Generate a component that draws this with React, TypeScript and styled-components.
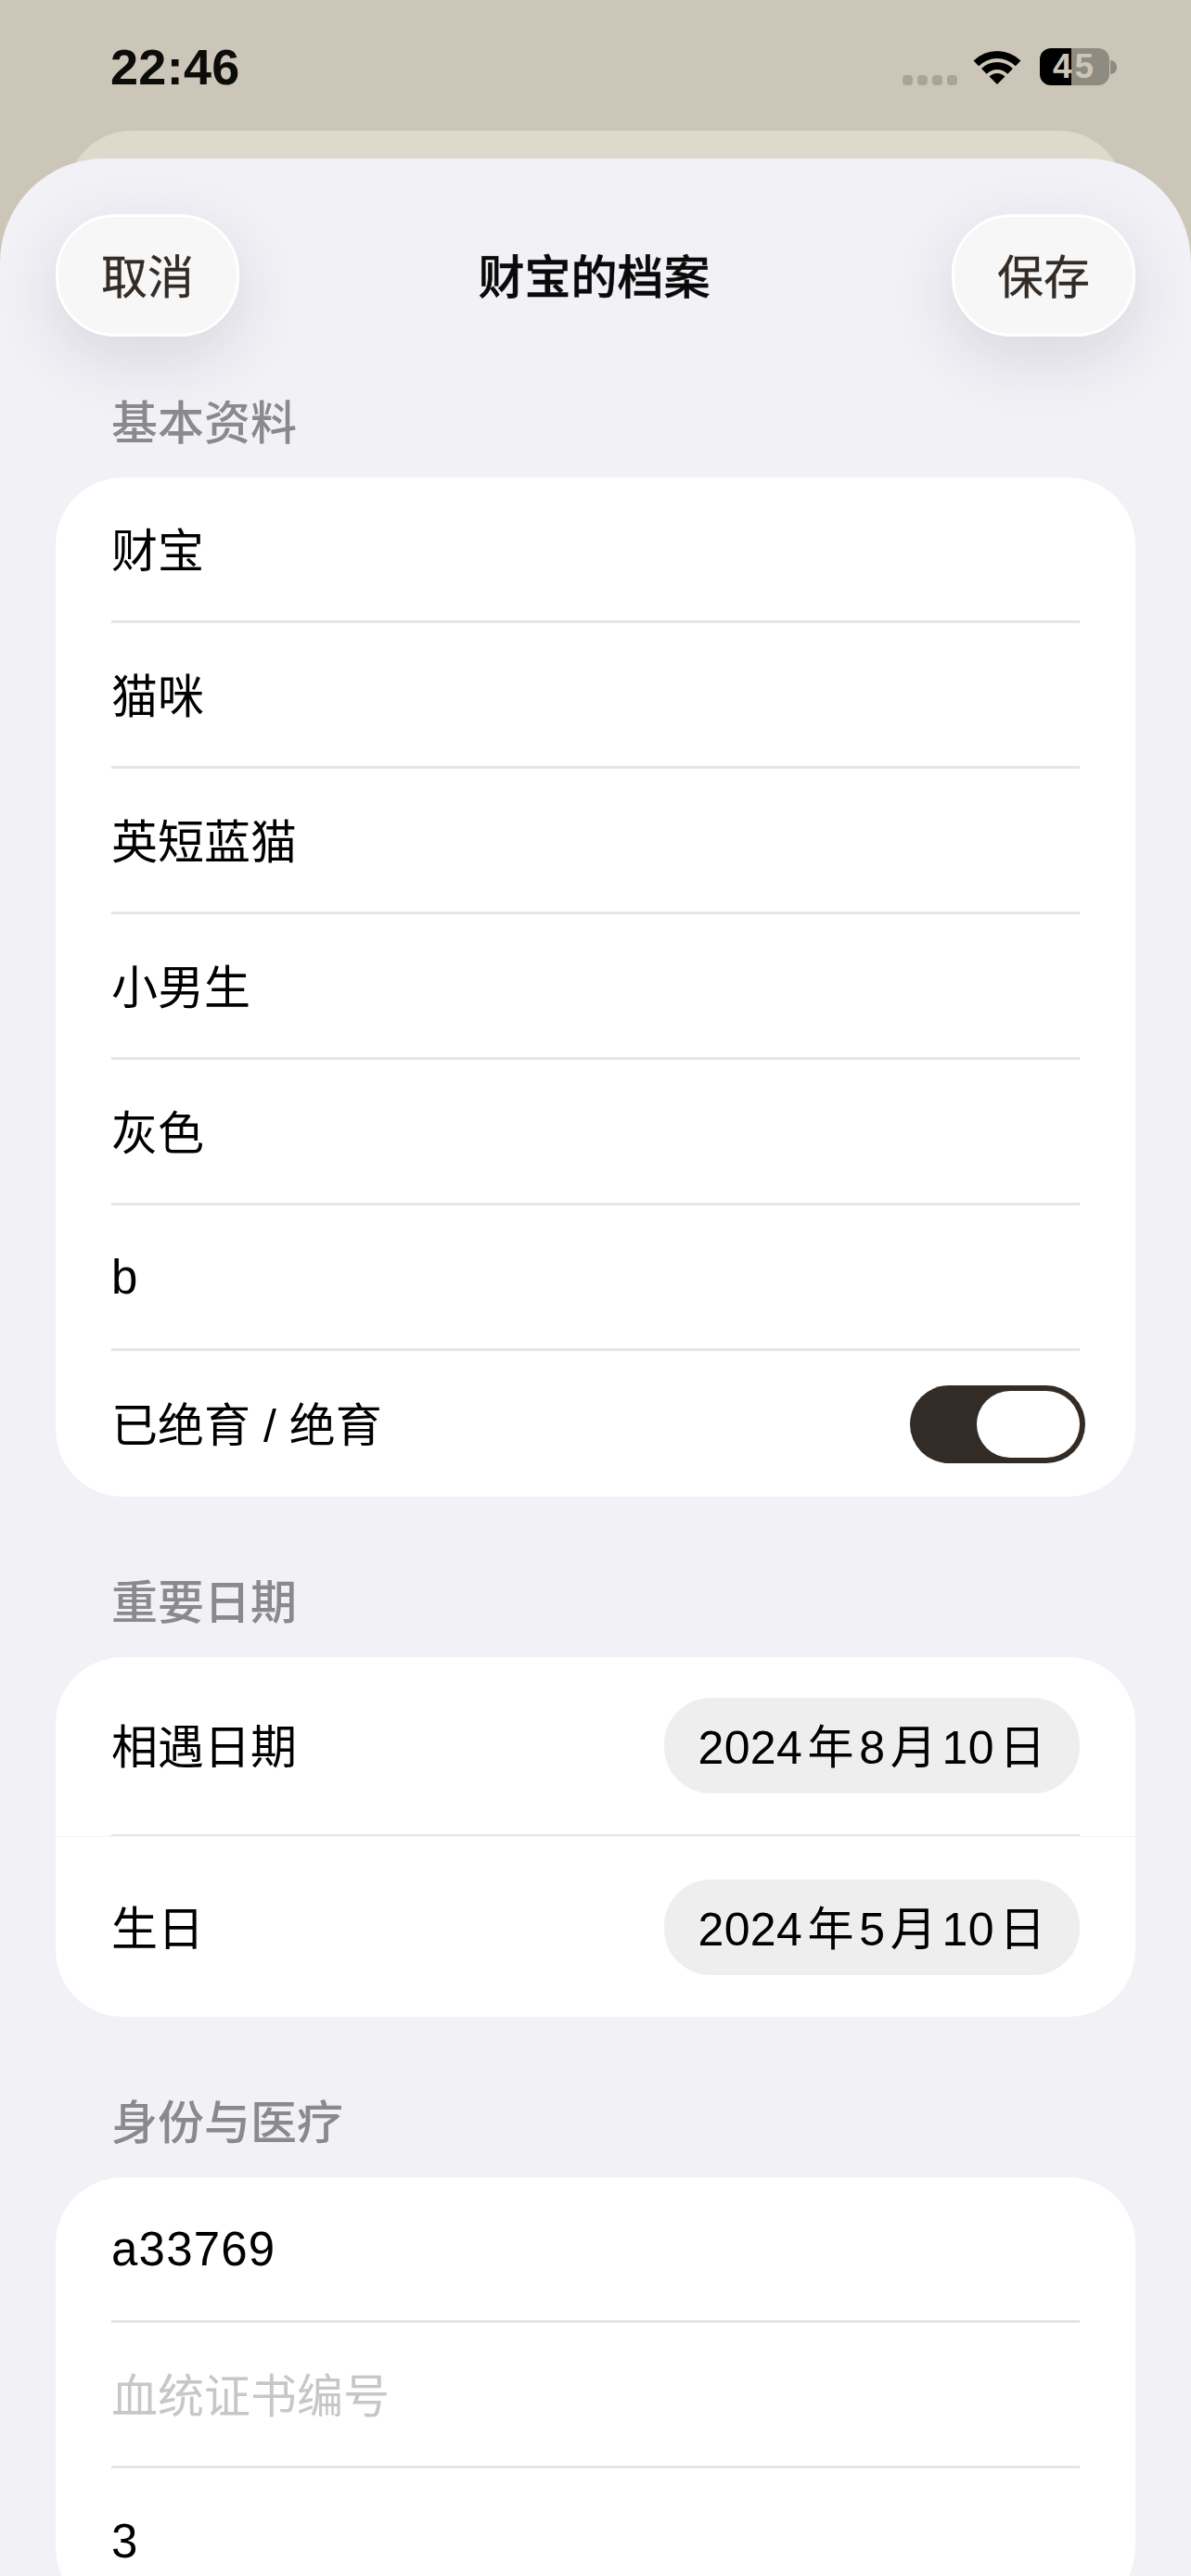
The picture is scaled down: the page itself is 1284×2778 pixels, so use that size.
import React, { ReactElement } from "react";
import styled, { createGlobalStyle } from "styled-components";

const GlobalStyle = createGlobalStyle`
  html, body {
    margin: 0;
    padding: 0;
    background: #ccc6b8;
  }
  * {
    box-sizing: border-box;
  }
`;

const Page = styled.div`
  width: 1284px;
  height: 2778px;
  overflow: hidden;
  background: #ccc6b8;
  font-family: "Liberation Sans", "Noto Sans CJK SC", sans-serif;
  color: #000;
`;

const StatusBar = styled.div`
  height: 141px;
  padding: 52px 80px 0 119px;
  display: flex;
  justify-content: space-between;
  align-items: flex-start;
`;

const Time = styled.div`
  font-size: 54px;
  font-weight: 700;
  line-height: 40px;
  letter-spacing: 0.3px;
  color: #0c0c0a;
`;

const StatusIcons = styled.div`
  display: flex;
  align-items: flex-start;
`;

const Signal = styled.div`
  display: flex;
  gap: 5px;
  margin: 29px 17px 0 0;
`;

const SignalDot = styled.span`
  width: 11px;
  height: 11px;
  border-radius: 4px;
  background: #a8a498;
`;

const WifiIcon = styled.svg`
  width: 52px;
  height: 37px;
  margin: 2px 20px 0 0;
`;

const Battery = styled.div`
  width: 75px;
  height: 40px;
  border-radius: 12px;
  background: linear-gradient(to right, #000 34px, #8e8b81 34px);
  color: #ccc6b8;
  font-size: 37px;
  font-weight: 700;
  line-height: 40px;
  letter-spacing: 3px;
  text-align: center;
`;

const BatteryCap = styled.span`
  width: 7px;
  height: 15px;
  margin: 13px 0 0 1px;
  border-radius: 0 8px 8px 0;
  background: #8e8b81;
`;

const BackCard = styled.div`
  height: 110px;
  margin: 0 72px;
  border-radius: 70px 70px 0 0;
  background: #dfd9cc;
`;

const Sheet = styled.div`
  position: relative;
  margin-top: -80px;
  height: 2700px;
  padding: 60px 60px 0;
  border-radius: 112px 112px 0 0;
  background: #f1f1f6;
`;

const Header = styled.div`
  display: flex;
  justify-content: space-between;
  align-items: center;
  margin-bottom: 62px;
`;

const HeaderButton = styled.div`
  width: 198px;
  height: 132px;
  padding-bottom: 4px;
  display: flex;
  align-items: center;
  justify-content: center;
  border: 3px solid #fff;
  border-radius: 64px;
  background: #f7f7f8;
  box-shadow: 0 22px 70px rgba(40, 40, 60, 0.13);
  color: #332b25;
  font-size: 50px;
  -webkit-text-stroke: 0.3px #332b25;
`;

const Title = styled.div`
  margin: 0 3px 4px 0;
  font-size: 50px;
  font-weight: 500;
  -webkit-text-stroke: 0.5px #0a0a0a;
  color: #0a0a0a;
`;

const Section = styled.section`
  & + & {
    margin-top: 83px;
  }
`;

const SectionTitle = styled.h2`
  margin: 0 0 30px;
  padding: 2px 0 0 60px;
  height: 60px;
  font-size: 50px;
  font-weight: 500;
  line-height: 60px;
  color: #8a8a8e;
`;

const Card = styled.div`
  border-radius: 72px;
  background: #fff;
  overflow: hidden;
`;

const Row = styled.div<{ $tall?: boolean; $last?: boolean }>`
  height: ${(p) => (p.$tall ? 194 : 157)}px;
  margin: 0 60px;
  display: flex;
  align-items: center;
  justify-content: space-between;
  border-bottom: ${(p) => (p.$last ? "none" : "3px solid #e5e5e6")};
  font-size: 50px;
`;

const FieldText = styled.span<{ $placeholder?: boolean; $latin?: boolean }>`
  margin-bottom: ${(p) => (p.$latin ? 0 : 5)}px;
  font-size: ${(p) => (p.$latin ? 51 : 50)}px;
  letter-spacing: ${(p) => (p.$latin ? 1.2 : 0)}px;
  color: ${(p) => (p.$placeholder ? "#c7c7c9" : "#000")};
`;

const FaintRule = styled.div`
  height: 1px;
  margin-top: -1px;
  background: #f4f4f4;
`;

const DatePill = styled.div`
  width: 448px;
  height: 103px;
  padding-bottom: 5px;
  display: flex;
  align-items: center;
  justify-content: center;
  border-radius: 50px;
  background: #eee;
  letter-spacing: 0.4px;
  word-spacing: -9px;
`;

const Toggle = styled.div`
  width: 189px;
  height: 84px;
  margin-right: -6px;
  padding: 6px;
  display: flex;
  justify-content: flex-end;
  border-radius: 42px;
  background: #332b25;
`;

const ToggleKnob = styled.span`
  width: 111px;
  height: 72px;
  border-radius: 36px;
  background: #fff;
`;

const basicFields = [
  { text: "财宝" },
  { text: "猫咪" },
  { text: "英短蓝猫" },
  { text: "小男生" },
  { text: "灰色" },
  { text: "b", latin: true },
];

const App = (): ReactElement => {
  return (
    <Page>
      <GlobalStyle />
      <StatusBar>
        <Time>22:46</Time>
        <StatusIcons>
          <Signal>
            <SignalDot />
            <SignalDot />
            <SignalDot />
            <SignalDot />
          </Signal>
          <WifiIcon viewBox="-1 0 52 37">
            <path d="M-.46 11.54A36 36 0 0 1 50.46 11.54L44.8 17.2A28 28 0 0 0 5.2 17.2Z" />
            <path d="M8.03 20.03A24 24 0 0 1 41.97 20.03L36.31 25.69A16 16 0 0 0 13.69 25.69Z" />
            <path d="M16.51 28.51A12 12 0 0 1 33.49 28.51L25 37Z" />
          </WifiIcon>
          <Battery>45</Battery>
          <BatteryCap />
        </StatusIcons>
      </StatusBar>
      <BackCard />
      <Sheet>
        <Header>
          <HeaderButton>取消</HeaderButton>
          <Title>财宝的档案</Title>
          <HeaderButton>保存</HeaderButton>
        </Header>

        <Section>
          <SectionTitle>基本资料</SectionTitle>
          <Card>
            {basicFields.map((field) => (
              <Row key={field.text}>
                <FieldText $latin={field.latin}>{field.text}</FieldText>
              </Row>
            ))}
            <Row $last>
              <FieldText>已绝育 / 绝育</FieldText>
              <Toggle>
                <ToggleKnob />
              </Toggle>
            </Row>
          </Card>
        </Section>

        <Section>
          <SectionTitle>重要日期</SectionTitle>
          <Card>
            <Row $tall>
              <FieldText>相遇日期</FieldText>
              <DatePill>2024 年 8 月 10 日</DatePill>
            </Row>
            <FaintRule />
            <Row $tall $last>
              <FieldText>生日</FieldText>
              <DatePill>2024 年 5 月 10 日</DatePill>
            </Row>
          </Card>
        </Section>

        <Section>
          <SectionTitle>身份与医疗</SectionTitle>
          <Card>
            <Row>
              <FieldText $latin>a33769</FieldText>
            </Row>
            <Row>
              <FieldText $placeholder>血统证书编号</FieldText>
            </Row>
            <Row $last>
              <FieldText $latin>3</FieldText>
            </Row>
          </Card>
        </Section>
      </Sheet>
    </Page>
  );
};

export default App;
